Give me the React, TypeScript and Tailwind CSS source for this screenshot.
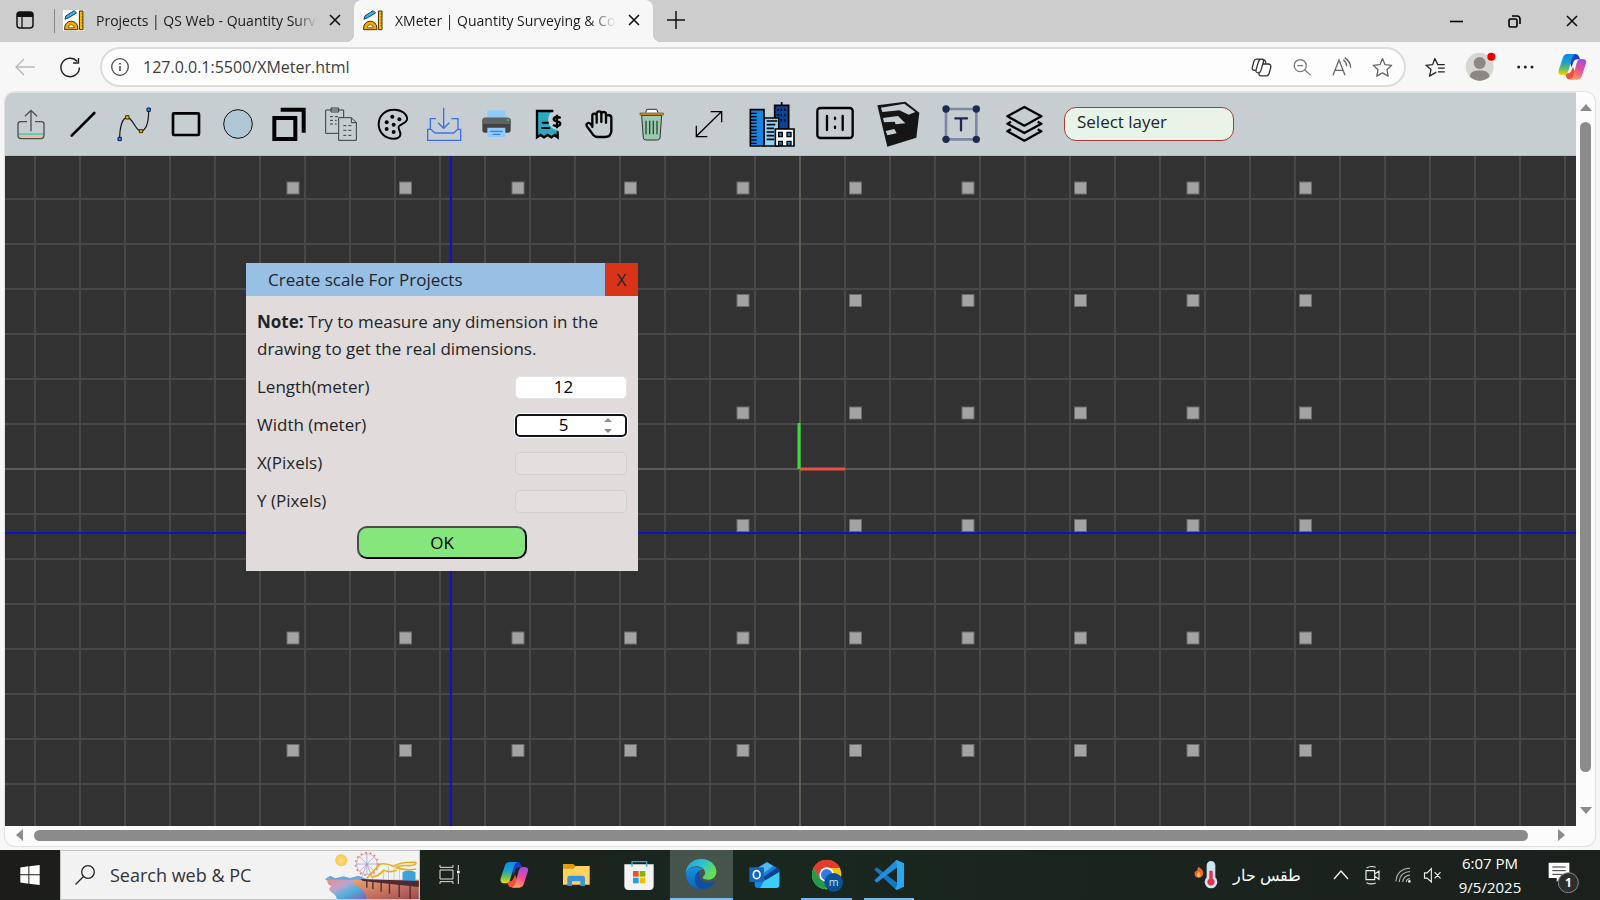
import React from "react";

const COLS = [0, 1, 2, 3, 4, 5, 6, 7, 8, 9];
const ROWS = [0, 1, 2, 3, 4, 5];

type IconProps = { box: string; className?: string; children: React.ReactNode };

const Icon = ({ box, className = "size-12", children }: IconProps) => (
  <svg viewBox={box} className={`${className} shrink-0`} fill="none" aria-hidden="true">
    {children}
  </svg>
);

const CopilotIcon = ({ className }: { className?: string }) => (
  <Icon box="233 147 96 96" className={className}>
    <defs>
      <linearGradient id="cpLeft" x1="0" y1="0" x2="0" y2="1">
        <stop offset="0" stopColor="#0d8ce8" />
        <stop offset="0.4" stopColor="#1b9fd0" />
        <stop offset="0.7" stopColor="#6bbf59" />
        <stop offset="1" stopColor="#ffd500" />
      </linearGradient>
      <linearGradient id="cpRight" x1="0.7" y1="0" x2="0.3" y2="1">
        <stop offset="0" stopColor="#a34be8" />
        <stop offset="0.5" stopColor="#ee5090" />
        <stop offset="1" stopColor="#ffa25c" />
      </linearGradient>
    </defs>
    <path d="M282 156H292Q300 156 302 164L305 172H296Q288 172 285 180L280 196 272 176Z" fill="#1a3fc4" />
    <path d="M283 232H274Q266 233 264 225L260 214H268Q276 214 279 206L284 194 292 214Z" fill="#f0503c" />
    <path d="M254 166Q258 156 267 156H292Q284 158 281 168L271 204Q267 220 257 220H250Q238 219 241 205Z" fill="url(#cpLeft)" />
    <path d="M310 223Q306 233 297 233H274Q282 231 285 221L294 186Q298 171 307 171H314Q326 172 323 184Z" fill="url(#cpRight)" />
  </Icon>
);

const Favicon = () => (
  <Icon box="190 28 64 64" className="size-[21px]">
    <path d="M190 28H254V92H190Z" fill="#fff" />
    <path d="M196 56 199 46 224 30 231 37 206 52Z" fill="#38b6f1" stroke="#10395c" strokeWidth="3" />
    <path d="M195 88V82A20 20 0 0 1 235 82V88Z" fill="#f5a800" stroke="#3a2c00" strokeWidth="3" />
    <path d="M206 82A9 9 0 0 1 224 82Z" fill="#fff" stroke="#3a2c00" strokeWidth="2" />
    <path d="M240 31H251V88H240Z" fill="#ffbf00" stroke="#3a2c00" strokeWidth="3" />
    <path d="M246 40H251M246 49H251M246 58H251M246 67H251M246 76H251" stroke="#3a2c00" strokeWidth="2" />
  </Icon>
);

const CloseMark = () => (
  <svg viewBox="0 0 12 12" className="size-3" aria-hidden="true">
    <path d="M1 1 11 11M11 1 1 11" stroke="#111" strokeWidth="1.6" />
  </svg>
);

const drawTools = [
  {
    label: "Import",
    icon: (
      <Icon box="21 30 144 144">
        <path d="M55 132H131" stroke="#35d39b" strokeWidth="5" />
        <path d="M56 139H130" stroke="#f5b39c" strokeWidth="6" />
        <path d="M81 95H62Q54 95 54 103V136Q54 146 64 146H122Q132 146 132 136V103Q132 95 124 95H105" stroke="#4a4f54" strokeWidth="4" />
        <path d="M93 124V62M75 79 93 61 111 79" stroke="#4a4f54" strokeWidth="4" />
      </Icon>
    ),
  },
  {
    label: "Line",
    icon: (
      <Icon box="176 30 144 144">
        <path d="M214 137 282 69" stroke="#000" strokeWidth="8" strokeLinecap="round" />
      </Icon>
    ),
  },
  {
    label: "Polyline",
    icon: (
      <Icon box="331 30 144 144">
        <path d="M360 146C360 112 368 82 383 82C400 84 408 124 424 124C442 120 447 90 447 60" stroke="#111" strokeWidth="3.5" />
        <path d="M355 142H365V152H355ZM442 54H452V64H442Z" fill="#2b8cff" stroke="#0a1e3c" strokeWidth="3" />
        <path d="M378 77H388V87H378ZM419 119H429V128H419Z" fill="#f9b316" stroke="#3a2800" strokeWidth="3" />
      </Icon>
    ),
  },
  {
    label: "Rectangle",
    icon: (
      <Icon box="486 30 144 144">
        <rect x="519" y="70" width="78" height="65" rx="3" stroke="#000" strokeWidth="8" />
      </Icon>
    ),
  },
  {
    label: "Circle",
    icon: (
      <Icon box="641 30 144 144">
        <circle cx="713" cy="102" r="43" fill="#b0c8d6" stroke="#111" strokeWidth="3" />
      </Icon>
    ),
  },
  {
    label: "Offset",
    icon: (
      <Icon box="796 30 144 144">
        <path d="M824 84H887V147H824Z" stroke="#000" strokeWidth="12" />
        <path d="M843 59H912V128" stroke="#000" strokeWidth="12" />
      </Icon>
    ),
  },
  {
    label: "Paste",
    icon: (
      <Icon box="951 30 144 144">
        <path d="M1015 130H977V60H1031V82M993 54H1016V66H993ZM1016 83H1054L1069 98V151H1016ZM1054 83V98H1069" stroke="#2f3f45" strokeWidth="3" />
        <path d="M990 80H1016M990 91H1010M990 102H1010M1030 107H1056M1030 121H1056M1030 136H1056" stroke="#2f3f45" strokeWidth="3" strokeDasharray="9 6" />
      </Icon>
    ),
  },
  {
    label: "Colors",
    icon: (
      <Icon box="1106 30 144 144">
        <path d="M1180 59C1203 58 1222 73 1220 89C1218 101 1199 101 1195 110C1192 119 1203 124 1200 135C1198 143 1190 146 1180 146C1154 146 1135 127 1135 103C1135 78 1154 59 1180 59Z" stroke="#000" strokeWidth="6" />
        <g fill="#000">
          <circle cx="1176" cy="80" r="6" />
          <circle cx="1197" cy="88" r="6" />
          <circle cx="1159" cy="97" r="6" />
          <circle cx="1180" cy="104" r="6" />
          <circle cx="1159" cy="117" r="6" />
          <circle cx="1180" cy="126" r="6" />
        </g>
      </Icon>
    ),
  },
  {
    label: "Save",
    icon: (
      <Icon box="31 30 144 144">
        <path d="M102 53V114M85 98 102 115 119 98M79 86H62V117M125 86H145V117M54 118H64L76 129H132L144 118H153V151H54Z" stroke="#3d6df2" strokeWidth="4" />
      </Icon>
    ),
  },
  {
    label: "Print",
    icon: (
      <Icon box="187 30 144 144">
        <path d="M233 61H287V86H233Z" fill="#90caf9" />
        <path d="M226 83H295Q303 84 303 92V120Q303 128 295 128H226Q218 128 218 120V92Q218 84 226 83Z" fill="#424242" />
        <path d="M218 92Q218 84 226 83H295Q303 84 303 92V102H218Z" fill="#616161" />
        <circle cx="295" cy="90" r="3" fill="#00e676" />
        <path d="M233 113H287V141H233Z" fill="#90caf9" />
        <path d="M242 124H279M249 133H272" stroke="#1976d2" strokeWidth="3" />
      </Icon>
    ),
  },
  {
    label: "Quantities",
    icon: (
      <Icon box="342 30 144 144">
        <path d="M380 64H426Q411 78 415 98Q421 116 443 121V141L434 134 424 142 413 134 402 142 391 134 380 142Z" fill="#2aa9c2" />
        <path d="M430 63H381V142L391 135 402 142 413 135 424 142 434 135 443 142V124" stroke="#000" strokeWidth="7" />
        <path d="M398 98H414M396 114H418" stroke="#000" strokeWidth="6" strokeLinecap="round" />
        <path d="M452 84Q447 81 440 81Q431 82 431 88Q432 93 441 94Q451 96 451 101Q450 108 441 108Q434 108 429 105M441 74V115" stroke="#000" strokeWidth="7" />
      </Icon>
    ),
  },
  {
    label: "Pan",
    icon: (
      <Icon box="497 30 144 144">
        <path
          d="M549 111V77Q549 71 555 71Q562 71 562 77V98M562 96V70Q563 64 569 64Q576 64 576 70V96M576 72Q577 66 583 66Q590 66 590 73V98M590 79Q592 75 598 75Q606 76 606 83V124Q604 141 587 141H566Q557 141 551 134L532 108Q530 101 536 99Q542 97 549 108"
          stroke="#000"
          strokeWidth="7"
          strokeLinecap="round"
          strokeLinejoin="round"
        />
      </Icon>
    ),
  },
  {
    label: "Delete",
    icon: (
      <Icon box="652 30 144 144">
        <path d="M708 68 711 58H741L745 68" fill="#fff" stroke="#333" strokeWidth="3" />
        <path d="M696 76H756L751 144Q750 150 743 150H709Q702 150 701 144Z" fill="#9bc9ae" stroke="#333" strokeWidth="3" />
        <path d="M691 69H761V75H691Z" fill="#f39c12" stroke="#5b4312" strokeWidth="2" />
        <path d="M709 92V133M720 92V133M731 92V133M742 92V133" stroke="#2d463a" strokeWidth="4" />
      </Icon>
    ),
  },
];

const viewTools = [
  {
    label: "Measure",
    icon: (
      <Icon box="826 30 144 144">
        <path d="M860 139 935 65M903 65H936V97M860 107V140H893" stroke="#000" strokeWidth="4" />
      </Icon>
    ),
  },
  {
    label: "Building",
    icon: (
      <Icon box="1012 30 144 144">
        <path d="M1092 46H1134V118H1092Z" fill="#0b4396" stroke="#000" strokeWidth="5" />
        <path d="M1113 36V46" stroke="#000" strokeWidth="5" />
        <path d="M1102 56V78M1112 56V102M1123 56V102" stroke="#000" strokeWidth="4" strokeDasharray="7 9" />
        <path d="M1060 84H1104V168H1060Z" fill="#8fd3f7" stroke="#000" strokeWidth="4" />
        <path d="M1068 93H1100M1068 104H1094M1068 115H1090M1068 126H1090M1068 137H1090M1068 148H1090" stroke="#000" strokeWidth="5" />
        <path d="M1019 59H1060V168H1019Z" fill="#1784e0" stroke="#000" strokeWidth="5" />
        <path d="M1021 70H1038M1021 80H1038M1021 90H1038M1021 100H1038M1021 110H1038M1021 120H1038M1021 130H1038M1021 140H1038M1021 150H1038M1021 160H1038" stroke="#000" strokeWidth="4" />
        <path d="M1094 117H1150V168H1094Z" fill="#fff" stroke="#000" strokeWidth="5" />
        <path d="M1104 127H1115V140H1104ZM1129 127H1141V140H1129ZM1104 154H1115V166H1104ZM1129 154H1141V166H1129Z" fill="#1784e0" stroke="#000" strokeWidth="4" />
      </Icon>
    ),
  },
  {
    label: "Scale",
    icon: (
      <Icon box="33 30 144 144">
        <rect x="52" y="54" width="106" height="90" rx="9" stroke="#000" strokeWidth="7" />
        <path d="M81 78V120M128 78V120M105 83V87M105 110V114" stroke="#000" strokeWidth="7" strokeLinecap="round" />
      </Icon>
    ),
  },
  {
    label: "3D model",
    icon: (
      <Icon box="222 30 144 144">
        <path d="M232 46 316 35 358 68 349 143 262 170Z" fill="#151515" />
        <path d="M243 53 313 41 346 66 326 74 298 61 247 66ZM249 84 294 78 316 100 287 103 284 95 252 97ZM257 123 283 117 290 130 262 136Z" fill="#c6ced1" />
      </Icon>
    ),
  },
  {
    label: "Text",
    icon: (
      <Icon box="410 30 144 144">
        <path d="M437 57H528V148H437Z" stroke="#7c88a4" strokeWidth="8" />
        <g fill="#1c2a52">
          <circle cx="437" cy="57" r="11" />
          <circle cx="528" cy="57" r="11" />
          <circle cx="437" cy="148" r="11" />
          <circle cx="528" cy="148" r="11" />
        </g>
        <path d="M465 85H500M482 85V121" stroke="#1c2a52" strokeWidth="7" strokeLinecap="round" />
      </Icon>
    ),
  },
  {
    label: "Layers",
    icon: (
      <Icon box="599 30 144 144">
        <path d="M672 51 723 79 672 107 621 79ZM632 95 621 101 672 129 723 101 712 95M632 118 621 124 672 152 723 124 712 118" stroke="#000" strokeWidth="7" strokeLinejoin="round" />
      </Icon>
    ),
  },
];

const Tabs = () => (
  <div className="flex h-[42px] shrink-0 items-center bg-[#cdcdcd] text-[14px] text-[#1b1b1b]">
    <button aria-label="Tab actions" className="ml-4 mr-5 pb-0.5">
      <svg viewBox="0 0 18 18" className="size-[18px]" fill="none" aria-hidden="true">
        <rect x="1" y="1" width="16" height="16" rx="3" stroke="#111" strokeWidth="1.5" />
        <path d="M1 6V4Q1 1 4 1H14Q17 1 17 4V6Z" fill="#111" />
        <path d="M6 6V17" stroke="#111" strokeWidth="1.3" />
      </svg>
    </button>
    <div className="h-6 w-px bg-[#888]" />
    <div className="flex h-full w-[299px] items-center gap-3 pb-0.5 pl-2">
      <Favicon />
      <span className="w-[221px] overflow-hidden whitespace-nowrap [mask-image:linear-gradient(to_right,#000_90%,transparent)]">
        Projects | QS Web - Quantity Surv
      </span>
      <button aria-label="Close tab">
        <CloseMark />
      </button>
    </div>
    <div className="relative flex h-full w-[299px] items-center gap-3 rounded-t-lg bg-[#f7f7f7] pb-0.5 pl-2 before:absolute before:-left-2 before:bottom-0 before:size-2 before:bg-[radial-gradient(circle_at_0_0,transparent_8px,#f7f7f7_8px)] after:absolute after:-right-2 after:bottom-0 after:size-2 after:bg-[radial-gradient(circle_at_100%_0,transparent_8px,#f7f7f7_8px)]">
      <Favicon />
      <span className="w-[221px] overflow-hidden whitespace-nowrap [mask-image:linear-gradient(to_right,#000_88%,transparent)]">
        XMeter | Quantity Surveying &amp; Co
      </span>
      <button aria-label="Close tab">
        <CloseMark />
      </button>
    </div>
    <button aria-label="New tab" className="ml-[14px] pb-0.5">
      <svg viewBox="0 0 18 18" className="size-[18px]" aria-hidden="true">
        <path d="M9 0V18M0 9H18" stroke="#111" strokeWidth="1.5" />
      </svg>
    </button>
    <div className="ml-auto flex items-center gap-[45px] pr-[22px]">
      <button aria-label="Minimize">
        <svg viewBox="0 0 13 13" className="size-[13px]" aria-hidden="true">
          <path d="M0 6.5H13" stroke="#000" strokeWidth="1.6" />
        </svg>
      </button>
      <button aria-label="Restore">
        <svg viewBox="0 0 13 13" className="size-[13px]" fill="none" aria-hidden="true">
          <rect x="1" y="4" width="8" height="8" rx="1.5" stroke="#000" strokeWidth="1.6" />
          <path d="M4 1H9Q12 1 12 4V9" stroke="#000" strokeWidth="1.6" />
        </svg>
      </button>
      <button aria-label="Close">
        <CloseMark />
      </button>
    </div>
  </div>
);

const AddressBar = () => (
  <div className="flex h-[50px] shrink-0 items-center pr-3">
    <button aria-label="Back" className="ml-[15px]">
      <svg viewBox="0 0 20 18" className="h-[18px] w-5" fill="none" aria-hidden="true">
        <path d="M20 9H1M9 1 1 9 9 17" stroke="#b9b9b9" strokeWidth="1.4" />
      </svg>
    </button>
    <button aria-label="Refresh" className="ml-[25px]">
      <svg viewBox="178 168 64 66" className="size-[21px]" fill="none" aria-hidden="true">
        <path d="M238 201A29 29 0 1 1 231 182M235 171V187H218" stroke="#222" strokeWidth="4.5" />
      </svg>
    </button>
    <div className="ml-[19px] flex h-10 flex-1 items-center rounded-full border-2 border-[#dcdcdc] bg-[#fdfdfd] pl-[9px] pr-[11px]">
      <svg viewBox="0 0 18 18" className="size-[18px]" fill="none" aria-hidden="true">
        <circle cx="9" cy="9" r="8.3" stroke="#444" strokeWidth="1.2" />
        <path d="M9 8V13M9 5V6.4" stroke="#444" strokeWidth="1.5" />
      </svg>
      <input
        aria-label="Address"
        defaultValue="127.0.0.1:5500/XMeter.html"
        className="ml-[14px] min-w-0 flex-1 bg-transparent text-[16px] text-[#3c3c3c] outline-none"
      />
      <div className="flex items-center gap-5">
        <button aria-label="Copilot search">
          <Icon box="152 170 66 66" className="size-[21px]">
            <path
              d="M186 177H170Q163 177 161 184L156 203Q154 212 163 212H168M186 177Q193 177 191 185L183 213Q181 220 174 220Q166 219 168 210L175 186Q178 177 186 177M184 229H200Q207 229 209 222L214 203Q216 192 206 192H189M184 229Q176 229 177 220M189 192 183 213M199 192Q198 178 188 177"
              stroke="#333"
              strokeWidth="4"
            />
          </Icon>
        </button>
        <button aria-label="Zoom out">
          <Icon box="273 171 63 63" className="size-5">
            <circle cx="299" cy="198" r="19" stroke="#777" strokeWidth="4" />
            <path d="M313 211 331 228M290 198H308" stroke="#777" strokeWidth="4" />
          </Icon>
        </button>
        <button aria-label="Read aloud">
          <Icon box="397 171 60 60" className="size-5">
            <path d="M400 226 418 180 436 226M406 211H430" stroke="#666" strokeWidth="4" />
            <path d="M431 179Q441 187 441 199M435 173Q452 184 453 203" stroke="#666" strokeWidth="4" />
          </Icon>
        </button>
        <button aria-label="Add to favorites">
          <Icon box="512 170 66 66" className="size-[21px]">
            <path d="M545 175 553 194 574 196 559 210 563 230 545 220 527 230 531 210 516 196 537 194Z" stroke="#666" strokeWidth="4" strokeLinejoin="round" />
          </Icon>
        </button>
      </div>
    </div>
    <button aria-label="Favorites" className="ml-[19px]">
      <Icon box="674 170 64 66" className="size-[21px]">
        <path d="M706 219 687 230 692 209 676 196 697 194 704 175 713 194H735M714 205H735M714 217H735M706 219 709 217" stroke="#222" strokeWidth="4" strokeLinejoin="round" />
      </Icon>
    </button>
    <button aria-label="Profile" className="ml-[19px]">
      <Icon box="796 158 96 90" className="h-[30px] w-8">
        <circle cx="840" cy="202" r="42" fill="#d8d6d3" />
        <circle cx="840" cy="191" r="18" fill="#8c8783" />
        <path d="M810 232Q812 213 840 213Q868 213 870 232Q840 256 810 232Z" fill="#8c8783" />
        <circle cx="875" cy="172" r="12" fill="#e80000" />
      </Icon>
    </button>
    <button aria-label="Settings" className="ml-[19px]">
      <Icon box="948 195 57 18" className="h-[6px] w-[19px]">
        <circle cx="956" cy="204" r="4.5" fill="#222" />
        <circle cx="976" cy="204" r="4.5" fill="#222" />
        <circle cx="996" cy="204" r="4.5" fill="#222" />
      </Icon>
    </button>
    <button aria-label="Copilot" className="ml-[21px]">
      <CopilotIcon className="size-8" />
    </button>
  </div>
);

const Toolbar = () => (
  <div className="flex h-[63px] shrink-0 items-center border-b border-[#b8c0c3] bg-[#c6ced1]">
    <div className="flex w-[672px]">
      {drawTools.map((tool) => (
        <button key={tool.label} aria-label={tool.label} className="flex min-w-0 flex-1 justify-center">
          {tool.icon}
        </button>
      ))}
    </div>
    <div className="flex w-[378px]">
      {viewTools.map((tool) => (
        <button key={tool.label} aria-label={tool.label} className="flex min-w-0 flex-1 justify-center">
          {tool.icon}
        </button>
      ))}
    </div>
    <select
      aria-label="Layer"
      className="ml-[9px] h-[34px] w-[170px] appearance-none rounded-xl border border-[#a83a3a] bg-[#e8f4e8] px-3 pb-1 text-[17px] text-[#212529]"
    >
      <option>Select layer</option>
    </select>
  </div>
);

const Drawing = () => (
  <svg className="absolute inset-0 h-full w-full" aria-hidden="true">
    <defs>
      <pattern id="grid" x="29" y="42" width="45" height="45" patternUnits="userSpaceOnUse">
        <path d="M0 1H45M1 0V45" stroke="#484848" strokeWidth="2" />
      </pattern>
    </defs>
    <rect width="100%" height="100%" fill="#323232" />
    <rect width="100%" height="100%" fill="url(#grid)" />
    <path d="M795 0V2000M0 313H4000" stroke="#5c5b54" strokeWidth="2" />
    <path d="M446 0V2000M0 377H4000" stroke="#1010c8" strokeWidth="2" />
    {ROWS.map((r) =>
      COLS.map((c) => (
        <rect key={`${r}-${c}`} x={282 + c * 112.5} y={26 + r * 112.5} width="12" height="12" fill="#a3a3a3" stroke="#6c6c6c" />
      ))
    )}
    <path d="M795 313H840" stroke="#ea5044" strokeWidth="3" />
    <path d="M794 267V313" stroke="#35e035" strokeWidth="3" />
  </svg>
);

const ScaleDialog = () => {
  const field = "w-28 rounded-[5px] text-center text-[17px]";
  return (
    <form className="absolute left-[241px] top-[107px] w-[392px] bg-[#e1dbdb] text-[17px] text-[#212529]">
      <div className="flex h-[33px] items-center justify-between bg-[#98c0e4] pl-[22px]">
        <span>Create scale For Projects</span>
        <button type="button" className="h-full w-[33px] bg-[#d93418]">
          X
        </button>
      </div>
      <div className="px-[11px] py-3">
        <p className="leading-[27px]">
          <b>Note:</b> Try to measure any dimension in the drawing to get the real dimensions.
        </p>
        <div className="mt-[6px]">
          <div className="flex h-[38px] items-center justify-between">
            <label htmlFor="length">Length(meter)</label>
            <input id="length" type="number" defaultValue={12} className={`${field} h-[23px] border border-[#e4e4e4] bg-white text-black`} />
          </div>
          <div className="flex h-[38px] items-center justify-between">
            <label htmlFor="width">Width (meter)</label>
            <div className="relative flex">
              <input
                id="width"
                type="number"
                defaultValue={5}
                className={`${field} h-[23px] border-2 border-[#101418] bg-white text-black ring-1 ring-white`}
              />
              <svg viewBox="0 0 8 16" className="absolute right-[15px] top-1 h-4 w-2" fill="#8b8b8b" aria-hidden="true">
                <path d="M4 0 8 4H0ZM4 15 8 11H0Z" />
              </svg>
            </div>
          </div>
          <div className="flex h-[38px] items-center justify-between">
            <label htmlFor="x-pixels">X(Pixels)</label>
            <input id="x-pixels" disabled className={`${field} h-[23px] border border-[#d2cfcf] bg-[#e3dfdf]`} />
          </div>
          <div className="flex h-[38px] items-center justify-between">
            <label htmlFor="y-pixels">Y (Pixels)</label>
            <input id="y-pixels" disabled className={`${field} h-[23px] border border-[#d2cfcf] bg-[#e3dfdf]`} />
          </div>
        </div>
        <button
          type="button"
          className="mx-auto mt-[6px] block h-[33px] w-[170px] rounded-[10px] border-2 border-b-black border-l-[#4b4b4b] border-r-black border-t-[#4b4b4b] bg-[#84e67c] text-black"
        >
          OK
        </button>
      </div>
    </form>
  );
};

const Arrow = ({ d }: { d: string }) => (
  <svg viewBox="0 0 12 12" className="size-3 shrink-0" fill="#8b8b8b" aria-hidden="true">
    <path d={d} />
  </svg>
);

const SearchArt = () => (
  <svg viewBox="972 124 284 144" className="h-12 w-[95px]" fill="none" aria-hidden="true">
    <defs>
      <linearGradient id="sea" x1="0" y1="0" x2="1" y2="1">
        <stop offset="0" stopColor="#e98f86" />
        <stop offset="0.35" stopColor="#b9a5d0" />
        <stop offset="0.6" stopColor="#4fb3d9" />
        <stop offset="1" stopColor="#7a5fc0" />
      </linearGradient>
      <linearGradient id="sand" x1="0" y1="0" x2="1" y2="1">
        <stop offset="0" stopColor="#f0a070" />
        <stop offset="1" stopColor="#9c4a50" />
      </linearGradient>
      <radialGradient id="sun">
        <stop offset="0" stopColor="#ffe38a" />
        <stop offset="1" stopColor="#fbc64a" />
      </radialGradient>
    </defs>
    <circle cx="1023" cy="152" r="18" fill="url(#sun)" />
    <path d="M975 208 990 198 1005 206 1030 200 1050 205 1075 198 1110 212H978Z" fill="#6aa7d4" />
    <path d="M982 210H1100V268H1010Q1008 256 994 248 980 238 994 230 978 222 982 210Z" fill="url(#sea)" />
    <path d="M1060 210H1256V268H1100Q1096 240 1060 222Z" fill="url(#sand)" />
    <circle cx="1100" cy="163" r="31" stroke="#d9b4c4" strokeWidth="3" />
    <circle cx="1100" cy="163" r="34" stroke="#f07a70" strokeWidth="5" strokeDasharray="5 9" />
    <path d="M1100 131V195M1068 163H1132M1077 140 1123 186M1123 140 1077 186M1100 163 1082 208M1100 163 1118 208" stroke="#9d93c0" strokeWidth="2" />
    <path d="M1165 170V210M1182 170V210M1198 170V210M1150 180V210" stroke="#c6ccd8" strokeWidth="3" />
    <path d="M1207 188Q1225 176 1246 188V218H1207Z" fill="#3ea2da" />
    <path d="M1100 206 1140 163Q1160 160 1180 170Q1200 156 1246 158Q1252 165 1230 168Q1190 166 1188 174Q1220 184 1248 178M1112 200Q1130 205 1150 182Q1170 190 1190 182" stroke="#e5b21c" strokeWidth="5" />
    <path d="M1080 208 1256 214V232L1088 214Z" fill="#4c2b33" />
    <path d="M1100 214V234M1118 216V238M1143 218V246M1168 220V252M1197 222V262M1230 226V268" stroke="#4c2b33" strokeWidth="4" />
  </svg>
);

const taskbarApps = [
  {
    label: "Task view",
    state: "",
    icon: (
      <Icon box="46 147 96 96" className="size-8">
        <path d="M61 165V172H100V165M61 222V215H100V222M61 180H100V207H61ZM116 165V180M116 192V222" stroke="#e4e4e4" strokeWidth="3" />
        <path d="M112 182H120V190H112Z" fill="#fff" />
      </Icon>
    ),
  },
  { label: "Copilot", state: "", icon: <CopilotIcon className="size-8" /> },
  {
    label: "File Explorer",
    state: "",
    icon: (
      <Icon box="421 147 96 96" className="size-8">
        <path d="M430 162H460L468 168V180H430Z" fill="#e09a10" />
        <path d="M430 176H462L468 168H510V224H430Z" fill="#ffd35e" />
        <path d="M443 228V204Q443 197 450 197H489Q496 197 496 204V228H482V214H457V228Z" fill="#3a94dc" />
      </Icon>
    ),
  },
  {
    label: "Microsoft Store",
    state: "",
    icon: (
      <Icon box="608 147 96 96" className="size-8">
        <path d="M612 163H700V229Q699 240 688 240H624Q613 240 612 229Z" fill="#f3f3f3" />
        <path d="M635 170V155H679V170" stroke="#2cabe0" strokeWidth="4" />
        <path d="M638 183H655V200H638Z" fill="#f25022" />
        <path d="M658 183H675V200H658Z" fill="#7fba00" />
        <path d="M638 203H655V220H638Z" fill="#1ea0e8" />
        <path d="M658 203H675V220H658Z" fill="#ffb900" />
      </Icon>
    ),
  },
  {
    label: "Edge",
    state: "bg-[#47534d] border-b-2 border-[#76b9ed]",
    icon: (
      <Icon box="797 147 96 96" className="size-8">
        <defs>
          <linearGradient id="edgeTop" x1="0" y1="0" x2="1" y2="0.5">
            <stop offset="0" stopColor="#1f9fdc" />
            <stop offset="0.5" stopColor="#2cc0d8" />
            <stop offset="1" stopColor="#66e04c" />
          </linearGradient>
          <linearGradient id="edgeSide" x1="0" y1="0" x2="0" y2="1">
            <stop offset="0" stopColor="#1593e0" />
            <stop offset="1" stopColor="#0c63bd" />
          </linearGradient>
        </defs>
        <path d="M800 196C798 168 820 150 846 150C872 150 891 168 891 188C891 203 880 212 866 212C856 212 849 209 850 204C856 199 858 194 857 189C854 177 842 172 830 172C815 172 802 182 800 196Z" fill="url(#edgeTop)" />
        <path d="M800 196C802 182 815 174 830 174C838 174 848 176 853 182C840 180 831 192 832 205C835 221 850 229 864 226L880 218C886 216 888 219 886 222C877 234 862 241 846 241C820 241 800 221 800 196Z" fill="url(#edgeSide)" />
        <path d="M838 186C822 198 822 224 840 240C860 243 878 234 887 221C888 218 884 216 880 218C860 227 838 216 838 186Z" fill="#124f9c" />
      </Icon>
    ),
  },
  {
    label: "Outlook",
    state: "",
    icon: (
      <Icon box="983 147 96 96" className="size-8">
        <path d="M1003 178 1040 156 1077 178V225Q1076 234 1067 234H1012Q1003 234 1003 225Z" fill="#1683dc" />
        <path d="M1012 174 1040 157 1058 168 1030 190Z" fill="#54b8f5" />
        <path d="M1030 200 1069 173 1077 178V190L1035 216Z" fill="#0d3f8f" />
        <path d="M1030 214 1077 186V225Q1076 234 1067 234H1020Z" fill="#3ccdf5" />
        <rect x="987" y="172" width="44" height="44" rx="4" fill="#1068c4" />
        <ellipse cx="1009" cy="194" rx="10" ry="12" stroke="#fff" strokeWidth="5" />
      </Icon>
    ),
  },
  {
    label: "Chrome",
    state: "after:absolute after:inset-x-[6px] after:bottom-0 after:h-[2px] after:bg-[#76b9ed]",
    icon: (
      <Icon box="1170 147 99 99" className="size-[33px]">
        <circle cx="1220" cy="194" r="44" fill="#fbc116" />
        <path d="M1181 173A44 44 0 0 1 1260 174H1220L1200 206Z" fill="#e33b2e" />
        <path d="M1181 173 1201 207 1222 214 1216 238A44 44 0 0 1 1181 173Z" fill="#229b50" />
        <circle cx="1220" cy="194" r="22" fill="#fff" />
        <circle cx="1220" cy="194" r="17" fill="#3079ed" />
        <circle cx="1241" cy="217" r="28" fill="#0a5296" />
        <text x="1241" y="227" fill="#cfe2f5" fontSize="32" textAnchor="middle">
          m
        </text>
      </Icon>
    ),
  },
  {
    label: "Visual Studio Code",
    state: "after:absolute after:inset-x-[6px] after:bottom-0 after:h-[2px] after:bg-[#76b9ed]",
    icon: (
      <Icon box="1359 147 96 96" className="size-8">
        <path d="M1363 179 1370 172 1433 220V239L1425 236Z" fill="#1577c0" />
        <path d="M1363 211 1370 218 1433 171V151L1425 154Z" fill="#1e8fd8" />
        <path d="M1430 150 1452 160V230L1430 240 1425 236 1431 228V162L1425 154Z" fill="#2aa6f2" />
      </Icon>
    ),
  },
];

const Taskbar = () => (
  <div className="flex h-[50px] shrink-0 bg-linear-to-r from-[#1c1d1a] via-[#19271f] to-[#1b201d] text-white">
    <button aria-label="Start" className="flex w-[60px] items-center justify-center">
      <svg viewBox="59 164 62 62" className="size-5" fill="#fff" aria-hidden="true">
        <path d="M60 172 85 168V193H60ZM88 168 120 164V193H88ZM60 196H85V222L60 218ZM88 196H120V226L88 222Z" />
      </svg>
    </button>
    <label className="flex w-[360px] items-center border border-[#c4c4c4] bg-[#f2f2f2] pl-[14px]">
      <svg viewBox="0 0 20 20" className="size-5 shrink-0" fill="none" aria-hidden="true">
        <circle cx="13" cy="7" r="6.3" stroke="#222" strokeWidth="1.3" />
        <path d="M8.5 11.5 0.5 19.5" stroke="#222" strokeWidth="1.3" />
      </svg>
      <input
        aria-label="Search"
        placeholder="Search web &amp; PC"
        className="ml-[15px] min-w-0 flex-1 bg-transparent text-[18px] text-[#333] outline-none placeholder:text-[#333]"
      />
      <SearchArt />
    </label>
    <div className="flex w-[500px]">
      {taskbarApps.map((app) => (
        <button key={app.label} aria-label={app.label} className={`relative flex flex-1 items-center justify-center ${app.state}`}>
          {app.icon}
        </button>
      ))}
    </div>
    <div className="ml-auto flex items-center">
      <button className="flex items-center gap-[15px]">
        <Icon box="40 240 72 90" className="h-[30px] w-6">
          <path d="M54 260Q60 268 62 266Q70 274 67 284Q63 293 54 293Q44 293 42 284Q40 276 46 272Q49 274 50 270Q50 264 54 260Z" fill="#f2662c" />
          <path d="M54 275Q62 282 58 289Q54 293 49 288Q47 281 54 275Z" fill="#ffbe3c" />
          <path d="M78 256A13 13 0 0 1 104 256V292A19 19 0 1 1 78 292Z" fill="#cfe3f5" />
          <path d="M86 272H96V296A11 11 0 1 1 86 296Z" fill="#e3304c" />
        </Icon>
        <span dir="rtl" lang="ar" className="text-[16px]">
          طقس حار
        </span>
      </button>
      <button aria-label="Show hidden icons" className="ml-8">
        <svg viewBox="0 0 16 10" className="h-[10px] w-4" fill="none" aria-hidden="true">
          <path d="M1 9 8 1 15 9" stroke="#eee" strokeWidth="1.4" />
        </svg>
      </button>
      <button aria-label="Meet now" className="ml-[15px]">
        <Icon box="552 255 48 60" className="h-5 w-4">
          <path d="M558 272H584V299H558ZM584 282 597 273V298L584 289M560 264Q572 256 587 262M560 308Q572 315 587 309" stroke="#eee" strokeWidth="3.5" />
        </Icon>
      </button>
      <button aria-label="Network" className="ml-[15px]">
        <Icon box="643 262 48 50" className="size-4">
          <path d="M645 307Q648 268 689 266M655 309Q657 278 689 276M666 309Q668 289 689 287M677 309Q678 300 689 298" stroke="#bbb" strokeWidth="3.5" />
          <circle cx="687" cy="307" r="4" fill="#fff" />
        </Icon>
      </button>
      <button aria-label="Volume" className="ml-3">
        <Icon box="724 260 57 52" className="h-[17px] w-[19px]">
          <path d="M728 278H736L749 265V306L736 294H728ZM759 276 777 295M777 276 759 295" stroke="#eee" strokeWidth="3.5" />
        </Icon>
      </button>
      <button className="ml-[13px] w-[70px] whitespace-nowrap text-center text-[15px] leading-6">
        <div>6:07 PM</div>
        <div>9/5/2025</div>
      </button>
      <button aria-label="Notifications" className="ml-[23px] mr-[21px] pt-1">
        <Icon box="1102 250 93 96" className="h-8 w-[31px]">
          <path d="M1104 255H1166V301H1138L1128 313V301H1104Z" fill="#fff" />
          <path d="M1115 268H1155M1115 279H1155M1115 290H1145" stroke="#333" strokeWidth="3" />
          <circle cx="1163" cy="315" r="30" fill="#2b2f2d" stroke="#888" strokeWidth="3" />
          <text x="1163" y="328" fill="#fff" fontSize="36" fontWeight="bold" textAnchor="middle">
            1
          </text>
        </Icon>
      </button>
    </div>
  </div>
);

const App = () => {
  return (
    <div className="flex h-screen flex-col overflow-hidden bg-[#f7f7f7] font-['Open_Sans','Noto_Sans',sans-serif]">
      <Tabs />
      <AddressBar />
      <main className="mx-[5px] mb-[4px] flex min-h-0 flex-1 flex-col overflow-hidden rounded-[10px] bg-[#fcfcfc] shadow-[0_0_0_1px_#e2e2e2]">
        <div className="flex min-h-0 flex-1">
          <div className="flex min-w-0 flex-1 flex-col border-t border-[#dfe3e4]">
            <Toolbar />
            <div className="relative flex-1 overflow-hidden">
              <Drawing />
              <ScaleDialog />
            </div>
          </div>
          <div className="flex w-[19px] flex-col items-center pb-[10px] pt-[10px]">
            <Arrow d="M6 2 12 9H0Z" />
            <div className="mb-8 mt-2 w-[11px] flex-1 rounded-full bg-[#8b8b8b]" />
            <Arrow d="M6 10 12 3H0Z" />
          </div>
        </div>
        <div className="flex h-5 items-center pb-0.5 pl-2 pr-[27px]">
          <Arrow d="M3 6 10 0V12Z" />
          <div className="ml-[9px] mr-7 h-[11px] flex-1 rounded-full bg-[#8b8b8b]" />
          <Arrow d="M9 6 2 0V12Z" />
        </div>
      </main>
      <Taskbar />
    </div>
  );
};

export default App;
